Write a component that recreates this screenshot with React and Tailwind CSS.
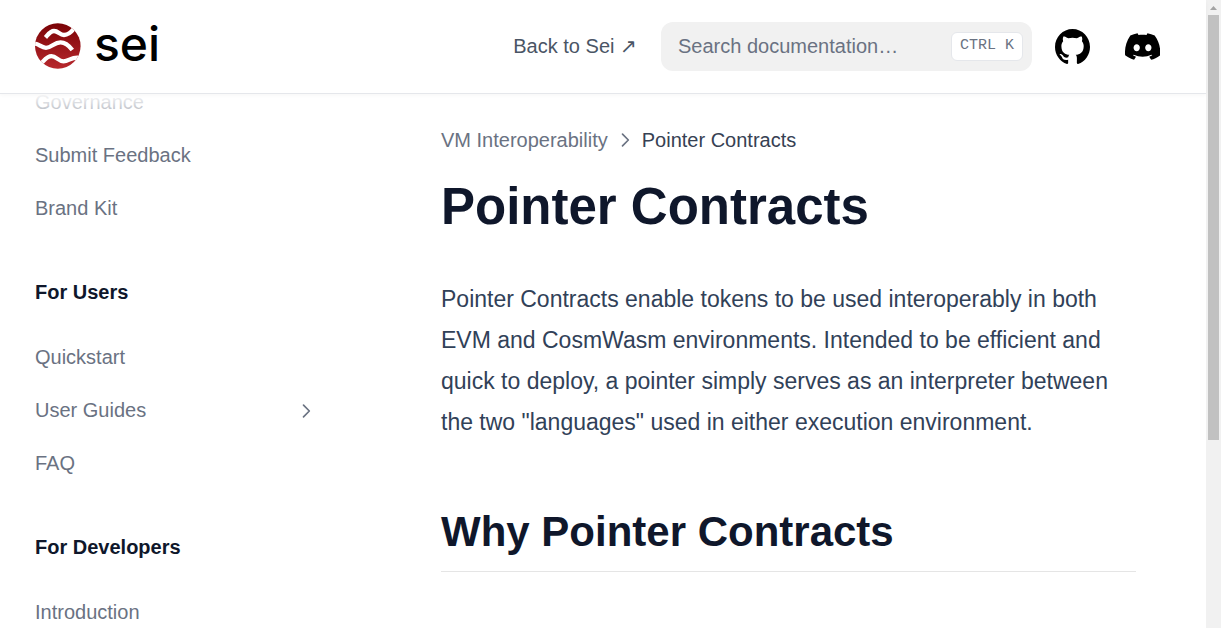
import React from "react";

const menu = [
  { items: [{ label: "Governance" }, { label: "Submit Feedback" }, { label: "Brand Kit" }] },
  {
    title: "For Users",
    items: [{ label: "Quickstart" }, { label: "User Guides", nested: true }, { label: "FAQ" }],
  },
  { title: "For Developers", items: [{ label: "Introduction" }] },
];

function Chevron({ className }) {
  return (
    <svg viewBox="0 0 24 24" fill="none" stroke="currentColor" strokeWidth="2" strokeLinecap="round" strokeLinejoin="round" className={className} aria-hidden="true">
      <path d="M9 5l7 7-7 7" />
    </svg>
  );
}

function Logo() {
  return (
    <a href="#home" aria-label="sei" className="flex items-center gap-[13px] text-black">
      <svg viewBox="0 0 46 46" className="size-[46px]" aria-hidden="true">
        <defs>
          <linearGradient id="disc" x1="0" y1="0" x2="0" y2="1">
            <stop offset="0" stopColor="#7a0306" />
            <stop offset="1" stopColor="#b8282d" />
          </linearGradient>
          <clipPath id="round">
            <circle cx="22.800" cy="23" r="22.8" />
          </clipPath>
        </defs>
        <circle cx="22.800" cy="23" r="22.8" fill="url(#disc)" />
        <g clipPath="url(#round)" fill="none" stroke="#fff" strokeWidth="4.300">
          <path d="M10.500 14.500C13.500 11 15.500 8 19 8C23.500 8 24.500 12 29 12C33 12 36 9.500 38.800 5.800" />
          <path d="M-1 20.500C4 20.500 6 24.800 11 24.800C16.500 24.800 19 19.400 25.500 19.400C30.500 19.400 33.500 22 37.300 27" />
          <path d="M5 41.500C9 38 11.500 33.200 16.500 33.200C21.500 33.200 23 38.300 28.500 38.300C33.500 38.300 36 34.200 43 34.600" />
        </g>
      </svg>
      <span className="pb-1 font-[Inter,sans-serif] text-[48px] leading-[46px] font-medium">sei</span>
    </a>
  );
}

function GitHubIcon() {
  return (
    <svg viewBox="3 3 18 18" fill="currentColor" className="size-[35px]" aria-hidden="true">
      <path d="M12 3C7.0275 3 3 7.12937 3 12.2276C3 16.3109 5.57625 19.7597 9.15374 20.9824C9.60374 21.0631 9.77249 20.7863 9.77249 20.5441C9.77249 20.3249 9.76125 19.5982 9.76125 18.8254C7.5 19.2522 6.915 18.2602 6.735 17.7412C6.63375 17.4759 6.19499 16.6569 5.8125 16.4378C5.4975 16.2647 5.0475 15.838 5.80124 15.8264C6.51 15.8149 7.01625 16.4954 7.18499 16.7723C7.99499 18.1679 9.28875 17.7758 9.80625 17.5335C9.885 16.9337 10.1212 16.53 10.38 16.2993C8.3775 16.0687 6.285 15.2728 6.285 11.7432C6.285 10.7397 6.63375 9.9092 7.20749 9.26326C7.1175 9.03257 6.8025 8.08674 7.2975 6.81794C7.2975 6.81794 8.05125 6.57571 9.77249 7.76377C10.4925 7.55615 11.2575 7.45234 12.0225 7.45234C12.7875 7.45234 13.5525 7.55615 14.2725 7.76377C15.9937 6.56418 16.7475 6.81794 16.7475 6.81794C17.2424 8.08674 16.9275 9.03257 16.8375 9.26326C17.4113 9.9092 17.76 10.7281 17.76 11.7432C17.76 15.2843 15.6563 16.0687 13.6537 16.2993C13.98 16.5877 14.2613 17.1414 14.2613 18.0065C14.2613 19.2407 14.25 20.2326 14.25 20.5441C14.25 20.7863 14.4188 21.0746 14.8688 20.9824C16.6554 20.364 18.2079 19.1866 19.3078 17.6162C20.4077 16.0457 20.9995 14.1611 21 12.2276C21 7.12937 16.9725 3 12 3Z" />
    </svg>
  );
}

function DiscordIcon() {
  return (
    <svg viewBox="0 5 30.67 23.25" fill="currentColor" className="size-[35px]" aria-hidden="true">
      <path d="M26.0015 6.9529C24.0021 6.03845 21.8787 5.37198 19.6623 5C19.3833 5.48048 19.0733 6.13144 18.8563 6.64292C16.4989 6.30193 14.1585 6.30193 11.8321 6.64292C11.6004 6.13144 11.2904 5.48048 11.0127 5C8.79434 5.37198 6.66939 6.03845 4.67 6.9529C0.6559 12.8736 -0.4206 18.6549 0.1125 24.3585C2.78703 26.3128 5.37953 27.4997 7.9292 28.2784C8.5591 27.4297 9.1198 26.5258 9.6019 25.5714C8.6826 25.2289 7.8032 24.8059 6.9683 24.3167C7.1894 24.1572 7.4056 23.9898 7.6122 23.8209C12.6967 26.1435 18.2209 26.1435 23.2447 23.8209C23.4547 23.9898 23.6708 24.1572 23.8887 24.3167C23.0538 24.8074 22.1714 25.2304 21.2542 25.573C21.7371 26.5274 22.2966 27.4312 22.9276 28.28C25.4788 27.5013 28.0748 26.3144 30.7493 24.3585C31.3749 17.7465 29.6808 12.0187 26.0015 6.9529ZM10.2527 20.8402C8.73376 20.8402 7.4938 19.4608 7.4938 17.7914C7.4938 16.122 8.7075 14.7411 10.2527 14.7411C11.7979 14.7411 13.0379 16.1205 13.0114 17.7914C13.0138 19.4608 11.7979 20.8402 10.2527 20.8402ZM20.4373 20.8402C18.9183 20.8402 17.6768 19.4608 17.6768 17.7914C17.6768 16.122 18.8921 14.7411 20.4373 14.7411C21.9825 14.7411 23.2225 16.1205 23.1960 17.7914C23.1960 19.4608 21.9825 20.8402 20.4373 20.8402Z" />
    </svg>
  );
}

function Header() {
  return (
    <header className="z-10 flex h-[93px] shrink-0 items-center bg-white pr-[46px] pl-[35px] shadow-[0_1px_0_#e5e7eb,0_2px_4px_rgba(0,0,0,0.04)]">
      <div className="mr-auto pb-0.5">
        <Logo />
      </div>
      <a href="#sei" className="mr-6 pb-0.5 text-xl whitespace-nowrap text-gray-600">
        Back to Sei ↗
      </a>
      <label className="mr-[23px] flex h-[49px] w-[371px] items-center rounded-xl bg-[#f1f1f1] pr-[9px] pl-[17px]">
        <input
          type="search"
          aria-label="Search documentation"
          placeholder="Search documentation…"
          className="min-w-0 flex-1 bg-transparent pb-0.5 text-xl leading-7 text-gray-500 outline-none placeholder:text-gray-500"
        />
        <kbd className="flex h-[29px] items-center rounded-md border border-gray-200 bg-white px-2 font-['Liberation_Mono',monospace] text-[15px] whitespace-pre text-gray-500">
          CTRL K
        </kbd>
      </label>
      <a href="#github" aria-label="GitHub" className="mr-[35px] text-black">
        <GitHubIcon />
      </a>
      <a href="#discord" aria-label="Discord" className="text-black">
        <DiscordIcon />
      </a>
    </header>
  );
}

function Sidebar() {
  return (
    <aside className="relative -mt-[17px] w-[373px] shrink-0 overflow-hidden">
      <nav className="pr-[57px] pl-[35px] text-xl">
        {menu.map((group, i) => (
          <section key={i} className="mb-[31px]">
            {group.title && <h2 className="mb-3 leading-[53px] font-semibold text-slate-900">{group.title}</h2>}
            <ul>
              {group.items.map((item) => (
                <li key={item.label}>
                  <a href="#page" className="flex items-center justify-between leading-[53px] text-gray-500">
                    {item.label}
                    {item.nested && <Chevron className="size-5" />}
                  </a>
                </li>
              ))}
            </ul>
          </section>
        ))}
      </nav>
      <div className="pointer-events-none absolute inset-x-0 top-[17px] h-10 bg-linear-to-b from-white to-transparent" />
    </aside>
  );
}

function Article() {
  return (
    <main className="min-w-0 flex-1 overflow-hidden pr-[70px] pl-[68px]">
      <nav aria-label="Breadcrumb" className="mt-8 flex items-center gap-[7px] text-xl leading-[30px] text-gray-500">
        <a href="#interop">VM Interoperability</a>
        <Chevron className="size-5" />
        <span className="text-gray-700">Pointer Contracts</span>
      </nav>
      <h1 className="mt-5 text-[51px] leading-[64px] font-bold text-slate-900">Pointer Contracts</h1>
      <p className="mt-10 text-[23px] leading-[41px] text-slate-700">
        Pointer Contracts enable tokens to be used interoperably in both EVM and CosmWasm environments. Intended to be
        efficient and quick to deploy, a pointer simply serves as an interpreter between the two "languages" used in
        either execution environment.
      </p>
      <h2 className="mt-[57px] border-b border-neutral-200 pb-[7px] text-[42px] leading-[64px] font-bold text-slate-900">
        Why Pointer Contracts
      </h2>
    </main>
  );
}

export default function App() {
  return (
    <div className="flex h-screen bg-white font-['Liberation_Sans',Arial,sans-serif] antialiased">
      <div className="flex min-w-0 flex-1 flex-col">
        <Header />
        <div className="flex min-h-0 flex-1">
          <Sidebar />
          <Article />
        </div>
      </div>
      <div aria-hidden="true" className="flex w-[15px] shrink-0 flex-col items-center bg-[#f1f1f1]">
        <svg viewBox="0 0 15 15" className="h-[15px] w-[15px]">
          <path d="M4 10L7.500 6L11 10Z" fill="#a3a3a3" />
        </svg>
        <div className="h-[425px] w-[11px] bg-[#c1c1c1]" />
      </div>
    </div>
  );
}
